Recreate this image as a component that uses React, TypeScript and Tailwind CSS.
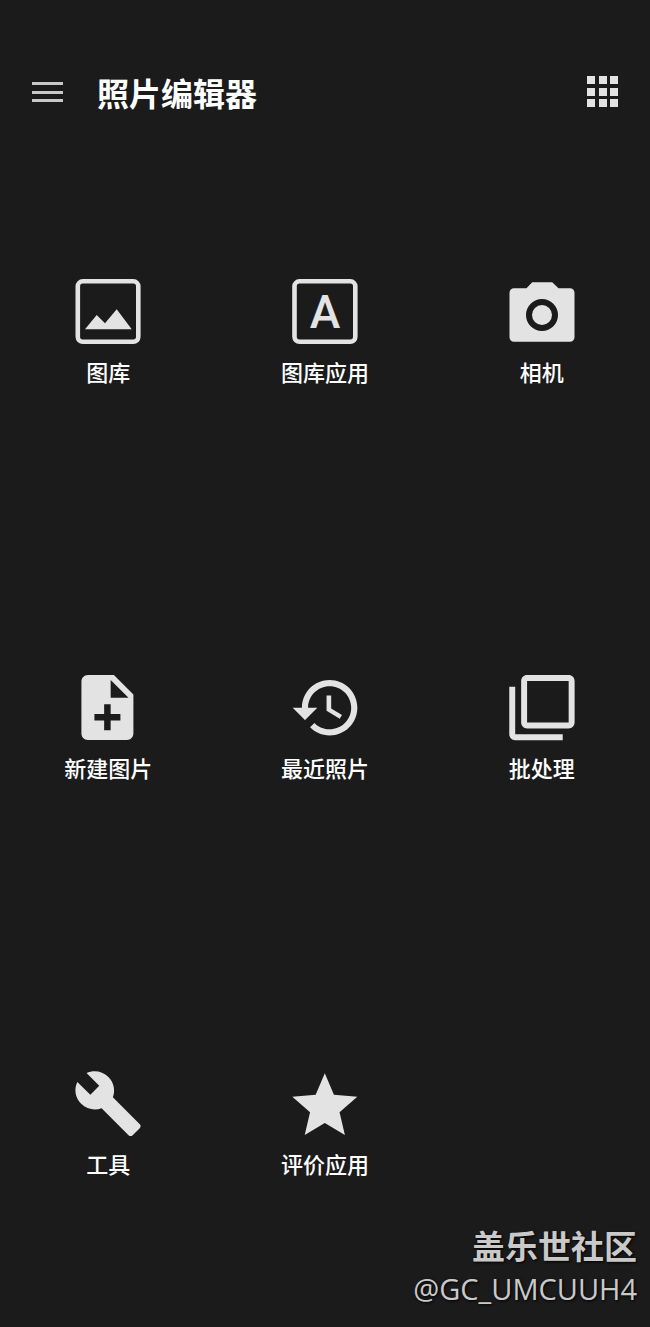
import React from 'react';

const LIGHT = '#e3e3e3';
const DARK = '#1b1b1b';

const Scaled = ({ x, y, s, d }: { x: number; y: number; s: number; d: string }) => (
  <path transform={`translate(${x} ${y}) scale(${s})`} d={d} fill={LIGHT} />
);

const icons: Record<string, React.ReactNode> = {
  image: (
    <>
      <rect x="12.8" y="13.3" width="60.5" height="60.5" rx="5" fill="none" stroke={LIGHT} strokeWidth="4.6" />
      <path d="M20 61.3 31.7 47l8.3 8.3 11.7-14 15 20z" fill={LIGHT} />
    </>
  ),
  letter: (
    <>
      <rect x="12.5" y="13.3" width="60.8" height="60.5" rx="5" fill="none" stroke={LIGHT} strokeWidth="4.6" />
      <text x="43" y="60.3" textAnchor="middle" fontSize="46" fontWeight="500" fill={LIGHT} fontFamily="Roboto, sans-serif">
        A
      </text>
    </>
  ),
  camera: (
    <>
      <path
        d="M15 20.3h12.5l5.7-6h20l6.3 6H71a4.5 4.5 0 0 1 4.5 4.5v44.4a4.5 4.5 0 0 1-4.5 4.5H15a4.5 4.5 0 0 1-4.5-4.5V24.8a4.5 4.5 0 0 1 4.5-4.5z"
        fill={LIGHT}
      />
      <circle cx="43" cy="47" r="13" fill="none" stroke={DARK} strokeWidth="6" />
    </>
  ),
  file: (
    <Scaled
      x={3.4}
      y={4.5}
      s={3.25}
      d="M14 2H6c-1.1 0-1.99.9-1.99 2L4 20c0 1.1.89 2 1.99 2H18c1.1 0 2-.9 2-2V8l-6-6zm2 14h-3v3h-2v-3H8v-2h3v-3h2v3h3v2zm-3-7V3.5L18.5 9H13z"
    />
  ),
  history: (
    <Scaled
      x={7.6}
      y={6.8}
      s={3.08}
      d="M13 3c-4.97 0-9 4.03-9 9H1l3.89 3.89.07.14L9 12H6c0-3.87 3.13-7 7-7s7 3.13 7 7-3.13 7-7 7c-1.93 0-3.68-.79-4.94-2.06l-1.42 1.42C8.27 19.99 10.51 21 13 21c4.97 0 9-4.03 9-9s-4.03-9-9-9zm-1 5v5l4.28 2.54.72-1.21-3.5-2.08V8H12z"
    />
  ),
  batch: (
    <Scaled
      x={7.3}
      y={8}
      s={2.97}
      d="M3 5H1v16c0 1.1.9 2 2 2h16v-2H3V5zm18-4H7c-1.1 0-2 .9-2 2v14c0 1.1.9 2 2 2h14c1.1 0 2-.9 2-2V3c0-1.1-.9-2-2-2zm0 16H7V3h14v14z"
    />
  ),
  wrench: (
    <Scaled
      x={7.6}
      y={8}
      s={2.96}
      d="M22.7 19l-9.1-9.1c.9-2.3.4-5-1.5-6.9-2-2-5-2.4-7.4-1.3L9 6 6 9 1.6 4.7C.4 7.1.9 10.1 2.9 12.1c1.9 1.9 4.6 2.4 6.9 1.5l9.1 9.1c.4.4 1 .4 1.4 0l2.3-2.3c.5-.4.5-1.1.1-1.4z"
    />
  ),
  star: (
    <Scaled
      x={3.8}
      y={6.8}
      s={3.25}
      d="M12 17.27L18.18 21l-1.64-7.03L22 9.24l-7.19-.61L12 2 9.19 8.63 2 9.24l5.46 4.73L5.82 21z"
    />
  ),
};

const items = [
  { label: '图库', icon: 'image' },
  { label: '图库应用', icon: 'letter' },
  { label: '相机', icon: 'camera' },
  { label: '新建图片', icon: 'file' },
  { label: '最近照片', icon: 'history' },
  { label: '批处理', icon: 'batch' },
  { label: '工具', icon: 'wrench' },
  { label: '评价应用', icon: 'star' },
];

export default function App() {
  return (
    <div className="relative h-[1327px] w-[650px] overflow-hidden bg-[#1b1b1b] font-['Noto_Sans_CJK_SC',sans-serif] text-white">
      {/* Top bar */}
      <header className="flex h-[268px] items-start justify-between px-[32px] pt-[73px]">
        <div className="flex items-center gap-[34px]">
          <div className="flex w-[31px] flex-col gap-[5.5px]">
            <span className="h-[3px] bg-[#c8c8c8]" />
            <span className="h-[3px] bg-[#c8c8c8]" />
            <span className="h-[3px] bg-[#c8c8c8]" />
          </div>
          <h1 className="text-[32px] font-bold leading-[38px]">照片编辑器</h1>
        </div>
        <div className="mt-[3px] grid grid-cols-3 gap-[3.5px]">
          {Array.from({ length: 9 }).map((_, i) => (
            <span key={i} className="h-2 w-2 bg-[#e3e3e3]" />
          ))}
        </div>
      </header>

      {/* Launcher grid */}
      <main className="grid grid-cols-3 auto-rows-[396px]">
        {items.map((item) => (
          <button key={item.label} className="flex flex-col items-center self-start">
            <svg width="86" height="86" viewBox="0 0 86 86" className="block">
              {icons[item.icon]}
            </svg>
            <span className="mt-[1px] text-[22px] font-medium leading-[32px]">{item.label}</span>
          </button>
        ))}
      </main>

      {/* Watermark */}
      <div className="absolute bottom-[18px] right-[13px] flex flex-col items-end text-[#c9c9c9] [text-shadow:1px_1px_3px_#000]">
        <span className="mb-[2px] text-[33px] font-bold leading-[44px]">盖乐世社区</span>
        <span className="font-['Open_Sans',sans-serif] text-[29px] leading-[40px]">@GC_UMCUUH4</span>
      </div>
    </div>
  );
}
